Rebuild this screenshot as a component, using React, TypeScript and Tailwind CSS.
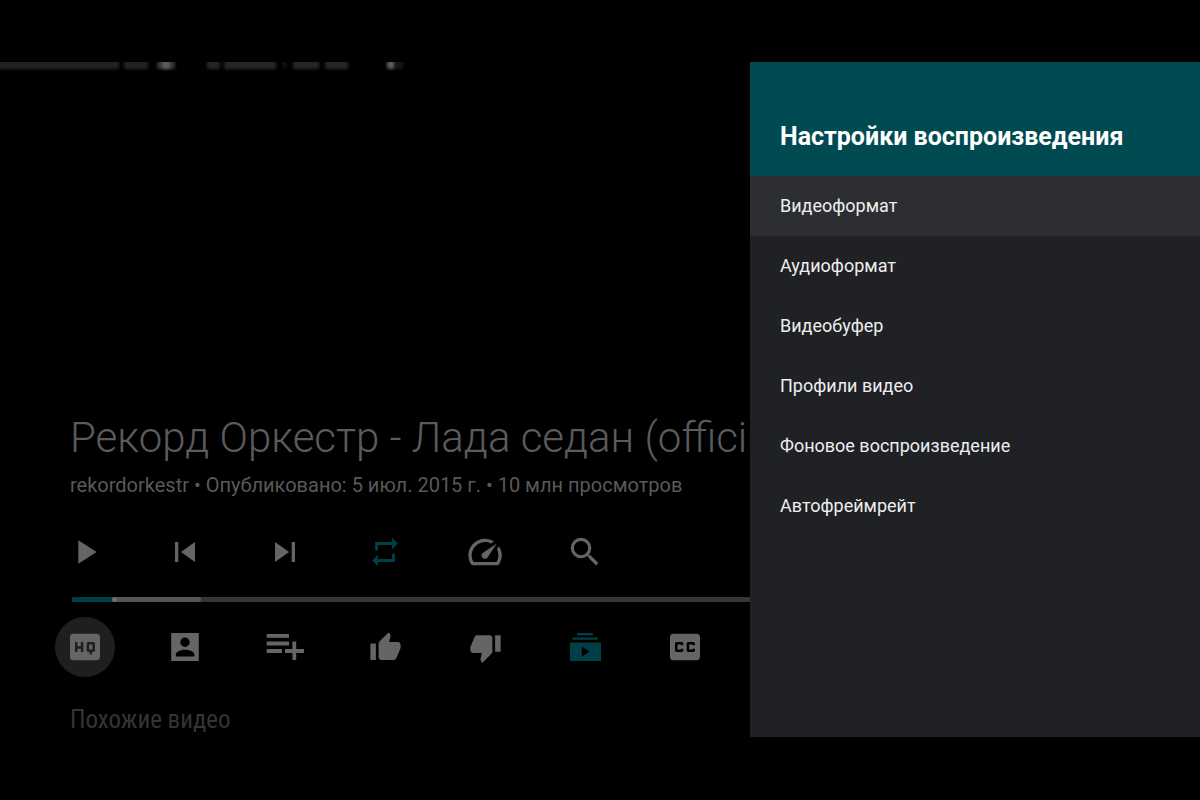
import { useState } from 'react';
import type { ReactNode } from 'react';
import {
  MdClosedCaption,
  MdHighQuality,
  MdPlayArrow,
  MdRepeat,
  MdSearch,
  MdSkipNext,
  MdSkipPrevious,
  MdSpeed,
  MdThumbDown,
  MdThumbUp,
} from 'react-icons/md';

interface Action {
  label: string;
  icon: ReactNode;
  active?: boolean;
}

const settings = [
  'Видеоформат',
  'Аудиоформат',
  'Видеобуфер',
  'Профили видео',
  'Фоновое воспроизведение',
  'Автофреймрейт',
];

const transport: Action[] = [
  { label: 'Воспроизвести', icon: <MdPlayArrow size={40} /> },
  { label: 'Предыдущее', icon: <MdSkipPrevious size={40} /> },
  { label: 'Следующее', icon: <MdSkipNext size={40} /> },
  { label: 'Повтор', icon: <MdRepeat size={34} />, active: true },
  { label: 'Скорость', icon: <MdSpeed size={40} /> },
  { label: 'Поиск', icon: <MdSearch size={38} /> },
];

const actions: Action[] = [
  { label: 'Качество', icon: <MdHighQuality size={40} /> },
  { label: 'Канал', icon: <ChannelIcon /> },
  { label: 'Добавить в плейлист', icon: <PlaylistIcon /> },
  { label: 'Нравится', icon: <MdThumbUp size={33} /> },
  { label: 'Не нравится', icon: <MdThumbDown size={33} /> },
  { label: 'Подписка', icon: <SubscriptionIcon />, active: true },
  { label: 'Субтитры', icon: <MdClosedCaption size={40} /> },
];

function ChannelIcon() {
  return (
    <svg width="40" height="40" viewBox="0 0 40 40" fill="currentColor">
      <path
        fillRule="evenodd"
        d="M6.2 6h27.6v28H6.2zM20 10.6a4.7 4.7 0 1 0 0 9.4 4.7 4.7 0 0 0 0-9.4zM10.8 29.6h18.6v-1.8c0-3.4-5.6-5-9.3-5s-9.3 1.6-9.3 5z"
      />
    </svg>
  );
}

function PlaylistIcon() {
  return (
    <svg width="40" height="40" viewBox="0 0 40 40" fill="currentColor">
      <path d="M1.7 7H24v3.8H1.7zM1.7 14.6H24v3.8H1.7zM1.7 22.1H17v3.8H1.7zM27.4 14.4h3.8v7.7H39v3.8h-7.8V33h-3.8v-7.1H20v-3.8h7.4z" />
    </svg>
  );
}

function SubscriptionIcon() {
  return (
    <svg width="40" height="40" viewBox="0 0 40 40" fill="currentColor">
      <path
        fillRule="evenodd"
        d="M12 6h15.8v2.2H12zM7.4 10.6h25.2v2.2H7.4zM5 15.4h31V34H5zM16.8 19.6v9.8l7.8-4.9z"
      />
    </svg>
  );
}

// what is left of the video frame under the dimmed overlay
function VideoStrip() {
  const blobs = [
    { x: -10, w: 129, fill: '#232425' },
    { x: 124, w: 24, fill: '#232425' },
    { x: 207, w: 13, fill: '#242526' },
    { x: 224, w: 52, fill: '#242526' },
    { x: 282, w: 5, fill: '#111111' },
    { x: 293, w: 26, fill: '#242526' },
    { x: 325, w: 23, fill: '#242526' },
    { x: 157, w: 18, fill: '#333333' },
    { x: 162, w: 8, fill: '#5c5c5c' },
    { x: 387, w: 8, fill: '#5c5c5c' },
    { x: 395, w: 8, fill: '#161616' },
  ];
  return (
    <svg className="absolute left-0 top-0" width="420" height="12" viewBox="0 0 420 12" aria-hidden="true">
      <defs>
        <filter id="soft" x="-50%" y="-50%" width="200%" height="200%">
          <feGaussianBlur stdDeviation="1.7" />
        </filter>
      </defs>
      {blobs.map((blob) => (
        <rect key={blob.x} x={blob.x} y="-2" width={blob.w} height="9" rx="2" fill={blob.fill} filter="url(#soft)" />
      ))}
    </svg>
  );
}

function ActionRow({ items, focused }: { items: Action[]; focused?: string }) {
  return (
    <div className="flex gap-10 pl-[55px]">
      {items.map((item) => (
        <button
          key={item.label}
          type="button"
          aria-label={item.label}
          className={`flex size-[60px] shrink-0 items-center justify-center rounded-full ${
            item.active ? 'text-[#003f47]' : 'text-[#646567]'
          } ${focused === item.label ? 'bg-[#1f1f21]' : ''}`}
        >
          {item.icon}
        </button>
      ))}
    </div>
  );
}

function ProgressBar() {
  const [position, setPosition] = useState(6);
  const buffered = 19;

  return (
    <div className="relative ml-[72px] h-[5px] rounded-l-full bg-[#363636]">
      <div
        className="absolute inset-y-0 left-0 rounded-full bg-[#555555]"
        style={{ width: `${buffered}%` }}
      />
      <div
        className="absolute inset-y-0 left-0 rounded-l-full bg-[#003f47]"
        style={{ width: `${position}%` }}
      />
      <input
        type="range"
        aria-label="Позиция воспроизведения"
        min={0}
        max={100}
        value={position}
        onChange={(e) => setPosition(Number(e.target.value))}
        className="absolute inset-0 h-[5px] w-full appearance-none bg-transparent [&::-webkit-slider-thumb]:size-[5px] [&::-webkit-slider-thumb]:appearance-none [&::-webkit-slider-thumb]:rounded-full [&::-webkit-slider-thumb]:bg-[#6e6e6e]"
      />
    </div>
  );
}

export default function App() {
  const [selected, setSelected] = useState(settings[0]);

  return (
    <div className="flex min-h-screen flex-col justify-center bg-black pb-px font-['Roboto',sans-serif]">
      <div className="relative flex aspect-video w-full overflow-hidden">
        <VideoStrip />

        <main className="flex min-w-0 flex-1 flex-col justify-end">
          <h1 className="whitespace-nowrap pl-[70px] text-[42px] font-light leading-[48px] text-[#5a5b5c]">
            Рекорд Оркестр - Лада седан (offici
          </h1>
          <p className="mt-[9px] whitespace-nowrap pl-[70px] text-xl leading-7 text-[#58595a]">
            rekordorkestr • Опубликовано: 5 июл. 2015 г. • 10 млн просмотров
          </p>
          <div className="mt-[23px]">
            <ActionRow items={transport} />
          </div>
          <div className="py-[15px]">
            <ProgressBar />
          </div>
          <ActionRow items={actions} focused="Качество" />
          <h2 className="mt-[26px] pl-[70px] font-['Roboto_Condensed','Roboto',sans-serif] text-[25px] leading-[34px] text-[#333436]">
            Похожие видео
          </h2>
        </main>

        <aside className="w-3/8 shrink-0 bg-[#202125]">
          <header className="flex h-[114px] items-end bg-[#004b52] px-[30px] pb-[23px]">
            <h2 className="whitespace-nowrap text-[25px] font-bold leading-8 text-white">Настройки воспроизведения</h2>
          </header>
          <nav className="flex flex-col">
            {settings.map((name) => (
              <button
                key={name}
                type="button"
                onClick={() => setSelected(name)}
                className={`h-[60px] px-[30px] text-left text-lg text-[#eeeeee] ${
                  selected === name ? 'bg-[#2d2e32]' : ''
                }`}
              >
                {name}
              </button>
            ))}
          </nav>
        </aside>
      </div>
    </div>
  );
}
